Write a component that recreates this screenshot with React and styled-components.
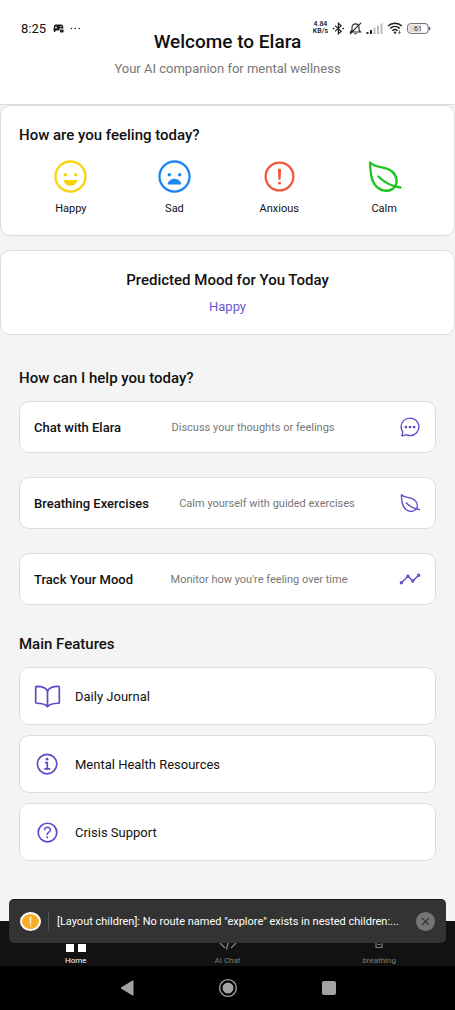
import React from "react";
import styled, { createGlobalStyle } from "styled-components";
import {
  IoAlertCircleOutline,
  IoAnalyticsOutline,
  IoBookOutline,
  IoChatbubbleEllipsesOutline,
  IoHappyOutline,
  IoHelpCircleOutline,
  IoInformationCircleOutline,
  IoSadOutline,
} from "react-icons/io5";

const GlobalStyle = createGlobalStyle`
  * {
    box-sizing: border-box;
  }
  body {
    margin: 0;
    background-color: #f4f4f4;
    font-family: Roboto, "Liberation Sans", sans-serif;
    color: #111;
  }
  h1, h2, p {
    margin: 0;
  }
  button {
    font-family: inherit;
    color: inherit;
    cursor: pointer;
  }
`;

const Screen = styled.div`
  position: relative;
  display: flex;
  flex-direction: column;
  min-height: 100vh;
`;

const StatusBar = styled.div`
  position: absolute;
  top: 20px;
  left: 21px;
  right: 24px;
  display: flex;
  align-items: center;
  height: 16px;
`;

const Clock = styled.span`
  font-size: 13px;
  margin-right: 7px;
`;

const Notifications = styled.div`
  display: flex;
  align-items: center;
  gap: 6px;
`;

const StatusIcons = styled.div`
  display: flex;
  align-items: center;
  gap: 4px;
  margin-left: auto;
`;

const Speed = styled.span`
  font-size: 7px;
  font-weight: 500;
  line-height: 7px;
  text-align: center;
`;

const Header = styled.header`
  display: flex;
  flex-direction: column;
  align-items: center;
  gap: 6px;
  padding: 30px 19px 27px;
  background-color: #fff;
  border-bottom: 1px solid #ddd;
`;

const Title = styled.h1`
  font-size: 19px;
  font-weight: 500;
  line-height: 24px;
`;

const Subtitle = styled.p`
  font-size: 13px;
  line-height: 17px;
  color: #777;
`;

const Main = styled.main`
  flex: 1;
  padding-bottom: 56px;
`;

const Panel = styled.section`
  padding: 18px;
  margin-bottom: 14px;
  background-color: #fff;
  border: 1px solid #ddd;
  border-radius: 10px;
`;

const PanelTitle = styled.h2`
  font-size: 15px;
  font-weight: 500;
  line-height: 22px;
  text-align: ${(props) => (props.$center ? "center" : "left")};
`;

const Moods = styled.div`
  display: flex;
  justify-content: space-around;
  margin-top: 12px;
`;

const MoodButton = styled.button`
  display: flex;
  flex-direction: column;
  align-items: center;
  gap: 6px;
  padding: 0;
  border: none;
  background: none;
  font-size: 11px;
  line-height: 16px;

  svg {
    color: ${(props) => props.$color};
  }
`;

const Prediction = styled.p`
  margin-top: 6px;
  font-size: 13px;
  line-height: 19px;
  text-align: center;
  color: #6a5acd;
`;

const Section = styled.section`
  padding: 0 19px;
  margin-top: ${(props) => props.$top};
`;

const SectionTitle = styled.h2`
  margin-bottom: 12px;
  font-size: 15px;
  font-weight: 500;
  line-height: 22px;
`;

const List = styled.div`
  display: flex;
  flex-direction: column;
  gap: ${(props) => props.$gap};
`;

const CardButton = styled.button`
  display: flex;
  align-items: center;
  width: 100%;
  padding: 0 14px;
  background-color: #fff;
  border: 1px solid #ddd;
  border-radius: 10px;
  text-align: left;

  svg {
    flex-shrink: 0;
    color: #5b4bc9;
  }
`;

const HelpCard = styled(CardButton)`
  justify-content: space-between;
  height: 52px;
`;

const HelpTitle = styled.span`
  font-size: 13px;
  font-weight: 500;
`;

const HelpText = styled.span`
  margin-right: 14px;
  font-size: 11px;
  color: #777;
`;

const FeatureCard = styled(CardButton)`
  gap: 14px;
  height: 58px;
  font-size: 13px;
`;

const Bottom = styled.footer`
  position: relative;
`;

const Tabs = styled.nav`
  display: flex;
  height: 45px;
  background-color: #121212;
`;

const Tab = styled.a`
  flex: 1;
  display: flex;
  flex-direction: column;
  align-items: center;
  justify-content: flex-end;
  gap: 4px;
  font-size: 8px;
  line-height: 10px;
  text-decoration: none;
  color: ${(props) => (props.$active ? "#fff" : "#7d7d7d")};
`;

const SystemNav = styled.div`
  display: flex;
  justify-content: center;
  gap: 84px;
  height: 44px;
  background-color: #000;
`;

const SystemButton = styled.button`
  display: flex;
  align-items: center;
  padding: 0;
  border: none;
  background: none;
`;

const Toast = styled.div`
  position: absolute;
  left: 9px;
  right: 9px;
  bottom: 67px;
  display: flex;
  align-items: center;
  height: 44px;
  padding: 0 11px;
  background-color: #333;
  border-top: 1px solid #1c1c1c;
  border-radius: 5px;
`;

const ToastBadge = styled.span`
  display: flex;
  align-items: center;
  justify-content: center;
  flex-shrink: 0;
  width: 21px;
  height: 19px;
  border: 2px solid #fff;
  border-radius: 50%;
  background-color: #f9ae2b;
  font-size: 12px;
  color: #fff;
`;

const ToastText = styled.span`
  flex: 1;
  min-width: 0;
  margin: 0 6px 0 7px;
  padding-left: 8px;
  border-left: 1px solid #555;
  font-size: 11px;
  line-height: 19px;
  color: #fff;
  overflow: hidden;
  text-overflow: ellipsis;
  white-space: nowrap;
`;

const ToastClose = styled.button`
  display: flex;
  align-items: center;
  justify-content: center;
  flex-shrink: 0;
  width: 19px;
  height: 19px;
  padding: 0;
  border: none;
  border-radius: 50%;
  background-color: #757575;
`;

const LeafIcon = ({ size }) => (
  <svg
    width={size}
    height={size}
    viewBox="0 0 37 37"
    fill="none"
    stroke="currentColor"
    strokeWidth="2.3"
    strokeLinecap="round"
    strokeLinejoin="round"
  >
    <path d="M4 4.5C9.5 10.5 18 7.5 25.500 13C31 17.500 32 24 29 28.500C25 34.500 16.500 33.500 11.500 29.500C5 24 4.500 15 4 4.500z" />
    <path d="M12.300 18.500C18 24 24 28.500 34.500 29.500" />
  </svg>
);

const moods = [
  { label: "Happy", color: "#f5d60a", Icon: IoHappyOutline },
  { label: "Sad", color: "#1e87f0", Icon: IoSadOutline },
  { label: "Anxious", color: "#ee5a3c", Icon: IoAlertCircleOutline },
  { label: "Calm", color: "#1fc41f", Icon: LeafIcon },
];

const helpers = [
  {
    title: "Chat with Elara",
    text: "Discuss your thoughts or feelings",
    Icon: IoChatbubbleEllipsesOutline,
  },
  {
    title: "Breathing Exercises",
    text: "Calm yourself with guided exercises",
    Icon: LeafIcon,
  },
  {
    title: "Track Your Mood",
    text: "Monitor how you're feeling over time",
    Icon: IoAnalyticsOutline,
  },
];

const features = [
  { label: "Daily Journal", Icon: IoBookOutline },
  { label: "Mental Health Resources", Icon: IoInformationCircleOutline },
  { label: "Crisis Support", Icon: IoHelpCircleOutline },
];

const GamepadIcon = () => (
  <svg width="11" height="9" viewBox="0 0 11 9">
    <path
      d="M2.5 0.5h6c1.2 0 1.6 1 1.8 2.5l0.2 1.5H6.5v2H3.2L1.8 8C0.6 8 0.3 7 0.5 5.5L0.9 2.5C1.1 1.2 1.5 0.5 2.5 0.5z"
      fill="#222"
    />
    <path d="M3 2.5v2M2 3.5h2M7 2.6h1.6" stroke="#fff" strokeWidth="0.7" />
    <rect x="7" y="5.4" width="3.6" height="3.2" rx="0.8" fill="#222" />
  </svg>
);

const DotsIcon = () => (
  <svg width="11" height="3" viewBox="0 0 11 3">
    <circle cx="1.3" cy="1.5" r="0.8" fill="#222" />
    <circle cx="5.3" cy="1.5" r="0.8" fill="#222" />
    <circle cx="9.3" cy="1.5" r="0.8" fill="#222" />
  </svg>
);

const BluetoothIcon = () => (
  <svg width="13" height="13" viewBox="0 0 13 13" fill="none" stroke="#222">
    <path d="M3 3.6l6.2 5.6-2.8 2.6V1.2l2.8 2.6L3 9.4" strokeWidth="1.2" />
    <circle cx="1.7" cy="6.5" r="0.5" fill="#222" />
    <circle cx="11.1" cy="6.5" r="0.5" fill="#222" />
  </svg>
);

const BellOffIcon = () => (
  <svg width="13" height="13" viewBox="0 0 13 13" fill="none" stroke="#222">
    <path
      d="M1.5 10h10L10 8.2V5.4C10 3.3 8.6 1.9 6.5 1.9S3 3.3 3 5.4v2.8L1.5 10zM5.3 11.7h2.4M12 0.8L1 12"
      strokeWidth="1.1"
    />
  </svg>
);

const SignalIcon = () => (
  <svg width="17" height="11" viewBox="0 0 17 11">
    <rect x="0.5" y="9" width="2" height="2" fill="#222" />
    <rect x="4" y="7" width="2" height="4" fill="#222" />
    <rect x="7.5" y="4.5" width="2" height="6.5" fill="#bbb" />
    <rect x="11" y="2.5" width="2" height="8.5" fill="#bbb" />
    <rect x="14.5" y="0.5" width="2" height="10.5" fill="#bbb" />
  </svg>
);

const WifiIcon = () => (
  <svg width="16" height="12" viewBox="0 0 16 12" fill="none" stroke="#222">
    <path
      d="M1 4C5 0.4 11 0.4 15 4M3.2 6.4c2.8-2.5 6.8-2.5 9.6 0M5.4 8.7c1.5-1.4 3.7-1.4 5.2 0"
      strokeWidth="1.5"
    />
    <circle cx="8" cy="10.6" r="0.8" fill="#222" />
    <path d="M12.5 8.5v3M11.3 10.3l1.2 1.2 1.2-1.2" strokeWidth="0.7" />
  </svg>
);

const BatteryIcon = () => (
  <svg width="24" height="11" viewBox="0 0 24 11">
    <rect x="0.6" y="0.6" width="20.6" height="9.8" rx="3" fill="#fff" stroke="#666" />
    <rect x="2" y="2" width="12" height="7" rx="1.5" fill="#ddd" />
    <path d="M22.6 4v3" stroke="#555" strokeWidth="1.3" />
    <text x="11" y="8" fontSize="7" textAnchor="middle" fill="#333">
      61
    </text>
  </svg>
);

const GridIcon = () => (
  <svg width="20" height="22" viewBox="0 0 20 22" fill="#fff">
    <path d="M0 2h8v8H0zM12 2h8v8h-8zM0 14h8v8H0zM12 14h8v8h-8z" />
  </svg>
);

const CodeIcon = () => (
  <svg width="20" height="22" viewBox="0 0 20 22" fill="none" stroke="#7d7d7d">
    <path d="M7 6l-6 6 6 6M13 6l6 6-6 6M12 4.500L8.500 19.500" strokeWidth="1.4" />
  </svg>
);

const BreathIcon = () => (
  <svg width="20" height="22" viewBox="0 0 20 22" fill="none" stroke="#7d7d7d">
    <path d="M7 6h6v11.500H7zM8.500 14.500h3" strokeWidth="1.2" />
  </svg>
);

const App = () => {
  const [toastOpen, setToastOpen] = React.useState(true);

  return (
    <Screen>
      <GlobalStyle />
      <Header>
        <Title>Welcome to Elara</Title>
        <Subtitle>Your AI companion for mental wellness</Subtitle>
      </Header>
      <StatusBar>
        <Clock>8:25</Clock>
        <Notifications>
          <GamepadIcon />
          <DotsIcon />
        </Notifications>
        <StatusIcons>
          <Speed>
            4.84
            <br />
            KB/s
          </Speed>
          <BluetoothIcon />
          <BellOffIcon />
          <SignalIcon />
          <WifiIcon />
          <BatteryIcon />
        </StatusIcons>
      </StatusBar>

      <Main>
        <Panel>
          <PanelTitle>How are you feeling today?</PanelTitle>
          <Moods>
            {moods.map(({ label, color, Icon }) => (
              <MoodButton key={label} $color={color}>
                <Icon size={37} />
                {label}
              </MoodButton>
            ))}
          </Moods>
        </Panel>

        <Panel>
          <PanelTitle $center>Predicted Mood for You Today</PanelTitle>
          <Prediction>Happy</Prediction>
        </Panel>

        <Section $top="32px">
          <SectionTitle>How can I help you today?</SectionTitle>
          <List $gap="24px">
            {helpers.map(({ title, text, Icon }) => (
              <HelpCard key={title}>
                <HelpTitle>{title}</HelpTitle>
                <HelpText>{text}</HelpText>
                <Icon size={22} />
              </HelpCard>
            ))}
          </List>
        </Section>

        <Section $top="28px">
          <SectionTitle>Main Features</SectionTitle>
          <List $gap="10px">
            {features.map(({ label, Icon }) => (
              <FeatureCard key={label}>
                <Icon size={27} />
                {label}
              </FeatureCard>
            ))}
          </List>
        </Section>
      </Main>

      <Bottom>
        <Tabs>
          <Tab href="#home" $active>
            <GridIcon />
            Home
          </Tab>
          <Tab href="#chat">
            <CodeIcon />
            AI Chat
          </Tab>
          <Tab href="#breathing">
            <BreathIcon />
            breathing
          </Tab>
        </Tabs>
        <SystemNav>
          <SystemButton aria-label="Back">
            <svg width="14" height="16" viewBox="0 0 14 16">
              <path d="M13 0.8v14.4L1 8z" fill="#a3a3a3" stroke="#a3a3a3" />
            </svg>
          </SystemButton>
          <SystemButton aria-label="Home">
            <svg width="20" height="20" viewBox="0 0 20 20">
              <circle cx="10" cy="10" r="8.4" fill="none" stroke="#a3a3a3" strokeWidth="1.4" />
              <circle cx="10" cy="10" r="5.5" fill="#a3a3a3" />
            </svg>
          </SystemButton>
          <SystemButton aria-label="Recent apps">
            <svg width="14" height="14" viewBox="0 0 14 14">
              <rect width="14" height="14" rx="2" fill="#a3a3a3" />
            </svg>
          </SystemButton>
        </SystemNav>
        {toastOpen && (
          <Toast role="alert">
            <ToastBadge>!</ToastBadge>
            <ToastText>
              [Layout children]: No route named "explore" exists in nested
              children:...
            </ToastText>
            <ToastClose aria-label="Dismiss" onClick={() => setToastOpen(false)}>
              <svg width="9" height="9" viewBox="0 0 9 9">
                <path d="M1 1l7 7M8 1L1 8" stroke="#333" strokeWidth="1.1" />
              </svg>
            </ToastClose>
          </Toast>
        )}
      </Bottom>
    </Screen>
  );
};

export default App;
